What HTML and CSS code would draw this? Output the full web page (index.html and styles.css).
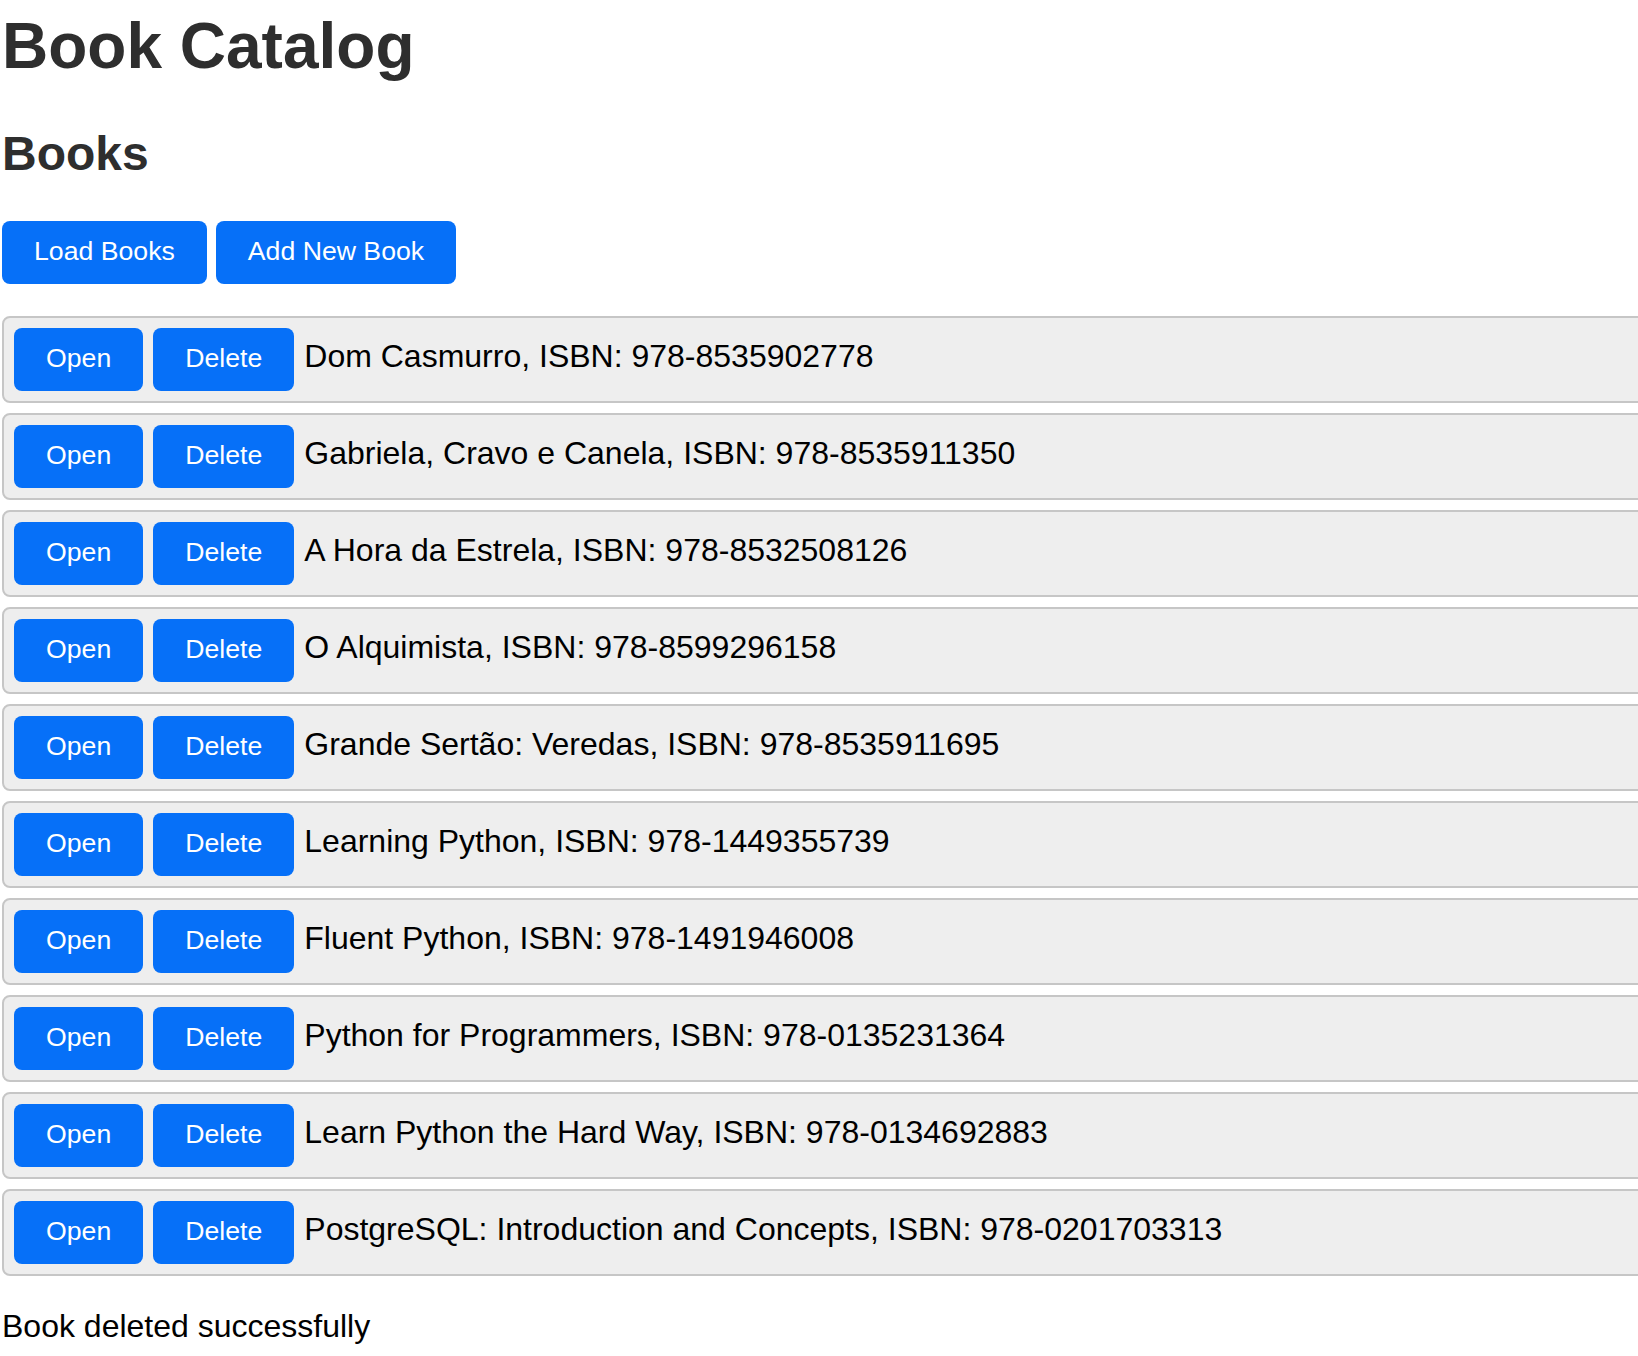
FILE: index.html
```html
<!DOCTYPE html>
<html lang="en">
<head>
<meta charset="utf-8">
<title>Book Catalog</title>
<link rel="stylesheet" href="styles.css">
</head>
<body>
<h1 class="title">Book Catalog</h1>
<h2 class="subtitle">Books</h2>
<div class="toolbar">
  <button class="btn">Load Books</button>
  <button class="btn">Add New Book</button>
</div>
<ul class="book-list">
  <li class="book-row"><button class="btn">Open</button><button class="btn">Delete</button><span class="book-text">Dom Casmurro, ISBN: 978-8535902778</span></li>
  <li class="book-row"><button class="btn">Open</button><button class="btn">Delete</button><span class="book-text">Gabriela, Cravo e Canela, ISBN: 978-8535911350</span></li>
  <li class="book-row"><button class="btn">Open</button><button class="btn">Delete</button><span class="book-text">A Hora da Estrela, ISBN: 978-8532508126</span></li>
  <li class="book-row"><button class="btn">Open</button><button class="btn">Delete</button><span class="book-text">O Alquimista, ISBN: 978-8599296158</span></li>
  <li class="book-row"><button class="btn">Open</button><button class="btn">Delete</button><span class="book-text">Grande Sertão: Veredas, ISBN: 978-8535911695</span></li>
  <li class="book-row"><button class="btn">Open</button><button class="btn">Delete</button><span class="book-text">Learning Python, ISBN: 978-1449355739</span></li>
  <li class="book-row"><button class="btn">Open</button><button class="btn">Delete</button><span class="book-text">Fluent Python, ISBN: 978-1491946008</span></li>
  <li class="book-row"><button class="btn">Open</button><button class="btn">Delete</button><span class="book-text">Python for Programmers, ISBN: 978-0135231364</span></li>
  <li class="book-row"><button class="btn">Open</button><button class="btn">Delete</button><span class="book-text">Learn Python the Hard Way, ISBN: 978-0134692883</span></li>
  <li class="book-row"><button class="btn">Open</button><button class="btn">Delete</button><span class="book-text">PostgreSQL: Introduction and Concepts, ISBN: 978-0201703313</span></li>
</ul>
<p class="status">Book deleted successfully</p>
</body>
</html>
```

FILE: styles.css
```css
html {
  overflow-x: hidden;
}

body {
  margin: 0;
  padding: 0 2px;
  font-family: "Liberation Sans", Arial, Helvetica, sans-serif;
  font-size: 32px;
  color: #000;
  background: #fff;
}

.title {
  margin: 9px 0 43px;
  font-size: 64px;
  line-height: 74px;
  font-weight: bold;
  color: #2e2e2e;
}

.subtitle {
  margin: 0 0 40px;
  font-size: 48px;
  line-height: 55px;
  font-weight: bold;
  color: #2e2e2e;
}

.toolbar {
  display: flex;
  gap: 9px;
}

.btn {
  font-family: "Liberation Sans", Arial, Helvetica, sans-serif;
  font-size: 26.67px;
  line-height: 31px;
  padding: 15px 32px 17px;
  border: none;
  border-radius: 8px;
  background: #0670f8;
  color: #fff;
  cursor: pointer;
}

.book-list {
  list-style: none;
  margin: 32px 0;
  padding: 0;
}

.book-row {
  display: flex;
  align-items: baseline;
  gap: 10px;
  width: 100%;
  padding: 10px;
  margin-bottom: 10px;
  background: #eeeeee;
  border: 2px solid #c6c6c6;
  border-radius: 8px;
}

.book-text {
  font-size: 32px;
  line-height: 37px;
  white-space: nowrap;
}

.status {
  margin: 31px 0 0;
  font-size: 32px;
  line-height: 37px;
}
```
